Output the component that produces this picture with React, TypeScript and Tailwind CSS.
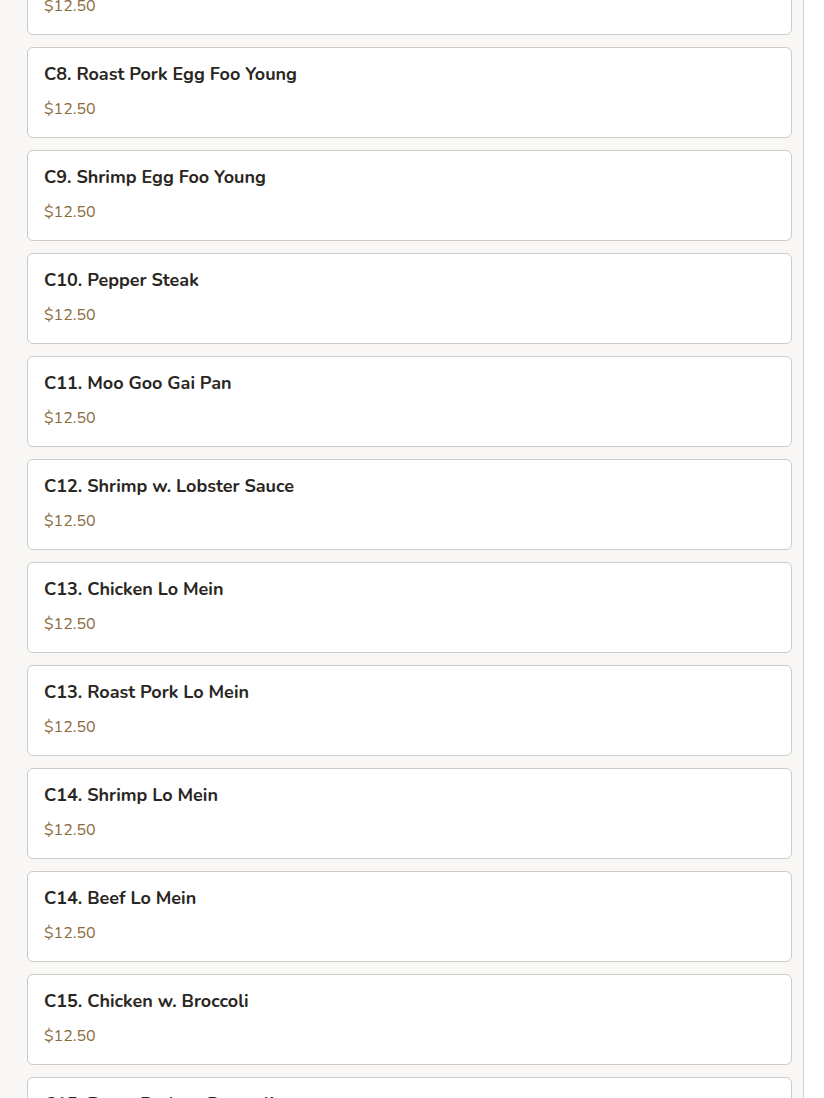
const items = [
  { name: 'C7. Beef Egg Foo Young', price: '$12.50' },
  { name: 'C8. Roast Pork Egg Foo Young', price: '$12.50' },
  { name: 'C9. Shrimp Egg Foo Young', price: '$12.50' },
  { name: 'C10. Pepper Steak', price: '$12.50' },
  { name: 'C11. Moo Goo Gai Pan', price: '$12.50' },
  { name: 'C12. Shrimp w. Lobster Sauce', price: '$12.50' },
  { name: 'C13. Chicken Lo Mein', price: '$12.50' },
  { name: 'C13. Roast Pork Lo Mein', price: '$12.50' },
  { name: 'C14. Shrimp Lo Mein', price: '$12.50' },
  { name: 'C14. Beef Lo Mein', price: '$12.50' },
  { name: 'C15. Chicken w. Broccoli', price: '$12.50' },
  { name: 'C15. Roast Pork w. Broccoli', price: '$12.50' },
];

export default function App() {
  return (
    <div className="h-[1098px] w-[824px] overflow-hidden bg-white font-['Nunito','Lato',sans-serif]">
      <div className="h-full w-[804px] overflow-hidden border-r border-[#cfcfcf] bg-[#f8f7f5] pl-[27px] pr-[11px]">
        <div className="-mt-[56px] flex flex-col gap-[12px]">
          {items.map((item, i) => (
            <div
              key={i}
              className="rounded-[6px] border border-[#cdcbc8] bg-white px-4 pt-[14px] pb-[16px]"
            >
              <h3 className="text-[18px] leading-[24px] font-bold text-[#2a2622]">{item.name}</h3>
              <p className="mt-[11px] text-[16px] leading-[24px] text-[#8b6a3e]">{item.price}</p>
            </div>
          ))}
        </div>
      </div>
    </div>
  );
}
